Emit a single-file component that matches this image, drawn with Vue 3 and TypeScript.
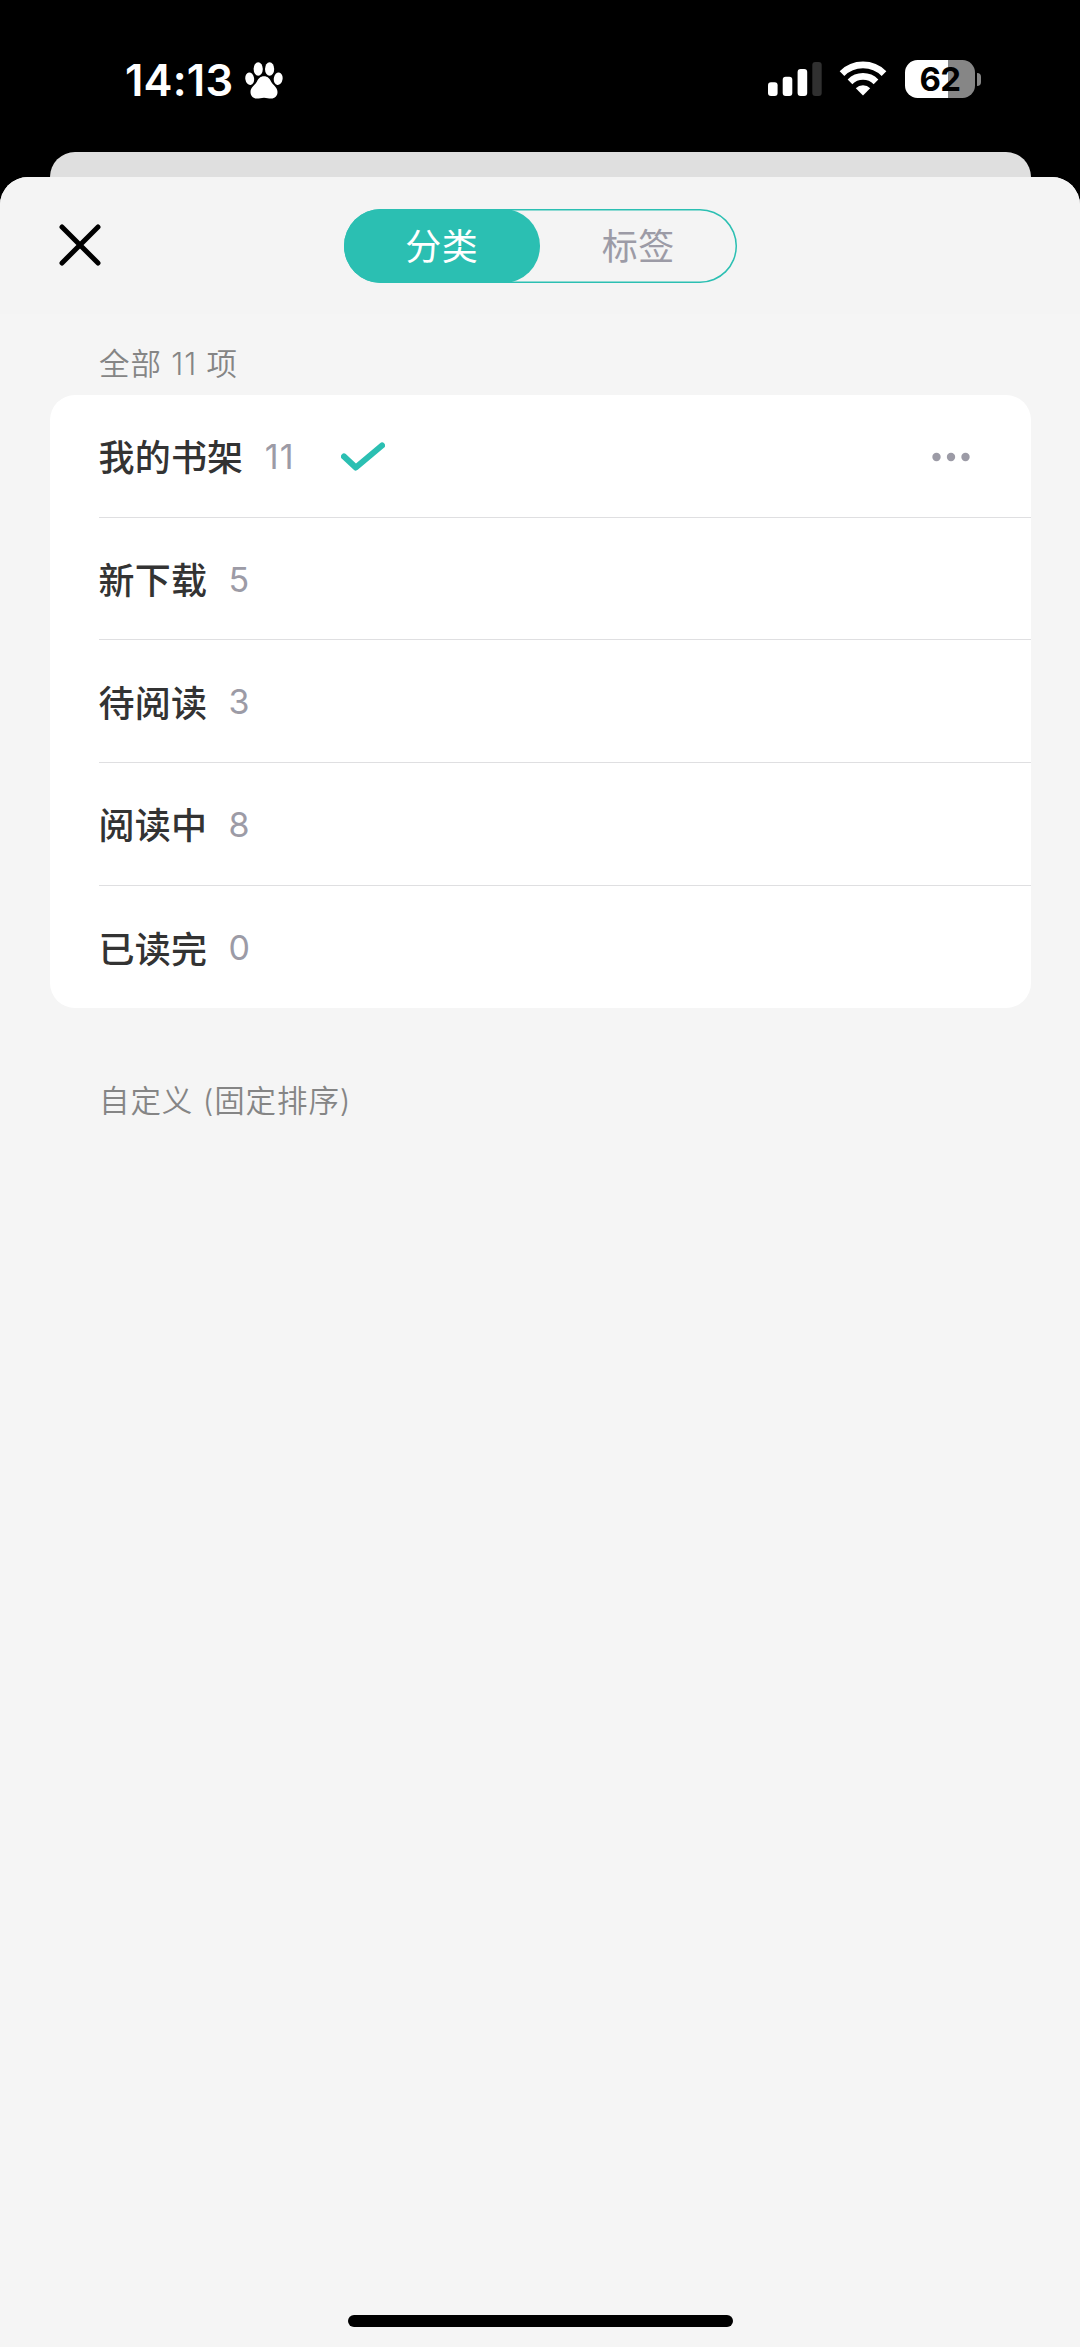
<script setup lang="ts">
import { ref } from 'vue'

interface Category {
  name: string
  count: number
}

const tabs: string[] = ['分类', '标签']
const activeTab = ref(0)
const selected = ref(0)
const categories: Category[] = [
  { name: '我的书架', count: 11 },
  { name: '新下载', count: 5 },
  { name: '待阅读', count: 3 },
  { name: '阅读中', count: 8 },
  { name: '已读完', count: 0 },
]
</script>

<template>
  <div class="screen">
    <div class="status">
      <span class="time">14:13</span>
      <svg class="paw" width="38" height="37" viewBox="0 0 38 37" fill="#fff">
        <ellipse cx="4.7" cy="16.7" rx="4.4" ry="6.3" transform="rotate(-8 4.7 16.7)" />
        <ellipse cx="13.2" cy="7" rx="4.6" ry="6.7" />
        <ellipse cx="24.6" cy="7" rx="4.6" ry="6.7" />
        <ellipse cx="33.2" cy="16.7" rx="4.4" ry="6.3" transform="rotate(8 33.2 16.7)" />
        <path d="M19 14.300c3.600 0 5.500 2.200 7 5.200 1.800 3.500 6.500 5.500 6.500 10.500 0 4-2.700 6.500-6.300 6.500-2.700 0-4.400-.8-7.200-.8s-4.500.8-7.200.8c-3.600 0-6.300-2.500-6.300-6.500 0-5 4.700-7 6.500-10.500 1.500-3 3.400-5.200 7-5.200z" />
      </svg>
      <span class="spacer"></span>
      <svg class="signal" width="54" height="34" viewBox="0 0 54 34" fill="#fff">
        <rect x="0" y="20.300" width="9.600" height="13.700" rx="3" />
        <rect x="14.700" y="14.700" width="9.600" height="19.300" rx="3" />
        <rect x="29.600" y="7" width="9.600" height="27" rx="3" />
        <rect x="44.300" y="0" width="9.400" height="34" rx="3" fill="#303030" />
      </svg>
      <svg class="wifi" width="48" height="35" viewBox="0 0 48 35" fill="none" stroke="#fff">
        <path d="M3 12.600A29.700 29.700 0 0 1 45 12.600" stroke-width="6.600" />
        <path d="M11 20.800A18.400 18.400 0 0 1 37 20.800" stroke-width="6.600" />
        <path d="M24 34.500L16.800 27.200Q19.700 24.300 24 24.300T31.200 27.200Z" fill="#fff" stroke="none" />
      </svg>
      <div class="battery"><span>62</span></div>
      <i class="battery-tip"></i>
    </div>

    <div class="back-sheet"></div>

    <main class="sheet">
      <header class="bar">
        <svg class="close" width="42" height="42" viewBox="0 0 42 42">
          <path d="M3 3L39 39M39 3L3 39" stroke="#000" stroke-width="5" stroke-linecap="round" />
        </svg>
        <div class="tabs">
          <div
            v-for="(tab, i) in tabs"
            :key="tab"
            class="tab"
            :class="{ active: i === activeTab }"
            @click="activeTab = i"
          >{{ tab }}</div>
        </div>
      </header>

      <h2 class="caption">全部 11 项</h2>
      <div class="card">
        <div v-for="(item, i) in categories" :key="item.name" class="row" @click="selected = i">
          <span class="name">{{ item.name }}</span>
          <span class="count">{{ item.count }}</span>
          <template v-if="i === selected">
            <svg class="check" width="44" height="30" viewBox="0 0 44 30">
              <path d="M3 14.500L14.800 25.500L41 3.500" fill="none" stroke="#2bbfb2" stroke-width="6" stroke-linecap="round" stroke-linejoin="round" />
            </svg>
            <span class="spacer"></span>
            <svg class="more" width="38" height="10" viewBox="0 0 38 10" fill="#9c9ba6">
              <circle cx="4.500" cy="5" r="4.200" /><circle cx="19" cy="5" r="4.200" /><circle cx="33.500" cy="5" r="4.200" />
            </svg>
          </template>
        </div>
      </div>
      <h2 class="caption custom">自定义 (固定排序)</h2>
      <div class="home"></div>
    </main>
  </div>
</template>

<style>
body {
  margin: 0;
  background: #000;
}
</style>

<style scoped>
.screen {
  width: 1080px;
  height: 2347px;
  display: flex;
  flex-direction: column;
  overflow: hidden;
  background: #000;
  font-family: Inter, "Noto Sans CJK SC", sans-serif;
}
.status {
  height: 152px;
  display: flex;
  align-items: flex-start;
  box-sizing: border-box;
  padding: 60px 99px 0 125px;
  color: #fff;
}
.spacer {
  flex: 1;
}
.time {
  width: 120px;
  font-size: 43.500px;
  line-height: 40px;
  font-weight: 600;
  letter-spacing: 0.200px;
  white-space: nowrap;
}
.paw {
  margin-top: 2px;
}
.signal {
  margin-top: 2px;
}
.wifi {
  margin: 1px 18px 0 17.500px;
}
.battery {
  width: 70px;
  height: 38px;
  border-radius: 12.500px;
  background: linear-gradient(to right, #fff 62%, #868686 62%);
  color: #000;
  font-size: 33px;
  line-height: 38px;
  font-weight: 700;
  letter-spacing: -0.500px;
  text-align: center;
}
.battery-tip {
  width: 4px;
  height: 13px;
  margin: 13px 0 0 2px;
  border-radius: 0 5px 5px 0;
  background: #868686;
}
.back-sheet {
  height: 25px;
  margin: 0 49.500px;
  border-radius: 25px 25px 0 0;
  background: #dfdfdf;
}
.sheet {
  flex: 1;
  display: flex;
  flex-direction: column;
  border-radius: 28px 28px 0 0;
  background: #f5f5f5;
}
.bar {
  height: 137px;
  box-sizing: border-box;
  padding: 31.500px 0 0 59px;
  display: flex;
  border-radius: 28px 28px 0 0;
  background: #f4f4f4;
}
.close {
  margin-top: 15.500px;
}
.tabs {
  width: 393px;
  height: 74px;
  box-sizing: border-box;
  margin-left: 242.500px;
  display: flex;
  border-radius: 37px;
  box-shadow: inset 0 0 0 1.500px #2bbfb2;
}
.tab {
  flex: 1;
  border-radius: 37px;
  color: #9c9ba6;
  font-size: 36px;
  line-height: 76px;
  letter-spacing: 0.500px;
  text-align: center;
}
.tab.active {
  background: #2bbfb2;
  color: #fff;
}
.caption {
  margin: 0;
  height: 81px;
  padding: 27px 0 0 99px;
  box-sizing: border-box;
  color: #858585;
  font-size: 30.500px;
  line-height: 45px;
  font-weight: 350;
  letter-spacing: 0.900px;
}
.card {
  margin: 0 49px 0 49.500px;
  border-radius: 25px;
  background: #fff;
}
.row {
  height: 122.700px;
  box-sizing: border-box;
  margin-left: 49px;
  padding-right: 61px;
  display: flex;
  align-items: center;
  border-bottom: 1px solid #dfdfe1;
}
.row:last-child {
  border-bottom: 0;
}
.name {
  padding-bottom: 1px;
  color: #333;
  font-size: 36px;
  font-weight: 500;
  letter-spacing: 0.200px;
}
.count {
  margin-left: 21.500px;
  padding-top: 1px;
  color: #9c9ba6;
  font-size: 34px;
  letter-spacing: 1px;
}
.check {
  margin: 3px 0 0 47px;
}
.more {
  margin-top: 3px;
}
.custom {
  margin-top: 43px;
}
.home {
  width: 385px;
  height: 12px;
  margin: auto auto 20px;
  border-radius: 6px;
  background: #000;
}
</style>
